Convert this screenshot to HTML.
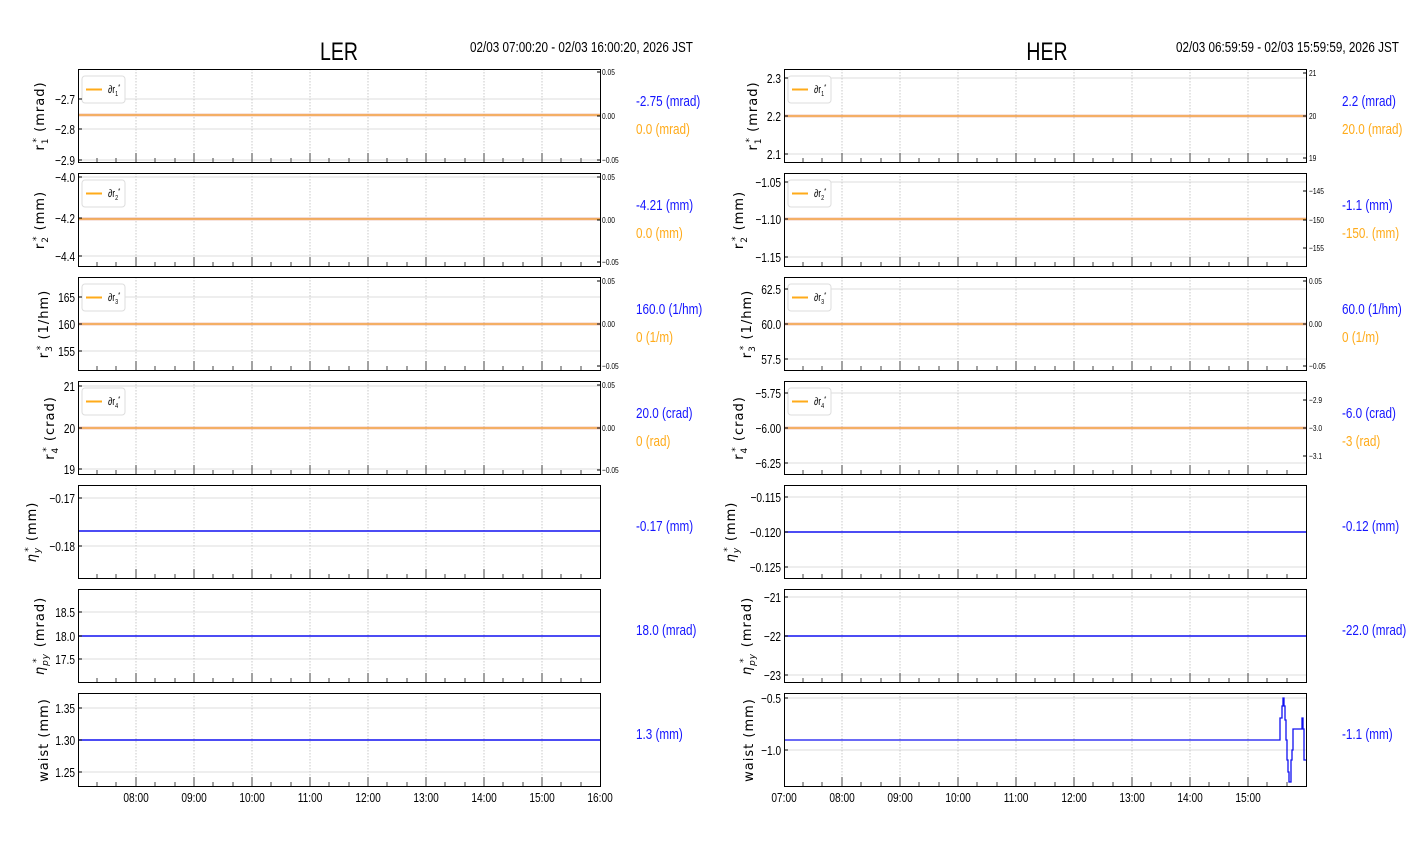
<!DOCTYPE html>
<html><head><meta charset="utf-8"><style>
html,body{margin:0;padding:0;background:#fff;}
svg{display:block;}
.n{font-family:"Liberation Sans Narrow","Liberation Sans",sans-serif;}
.n text{transform-box:fill-box;transform-origin:0 0;transform:scaleX(.78);}
.n .e text{transform-origin:100% 0;}
.n .m text,.n text.m{transform-origin:50% 0;}
.yl{font-family:"DejaVu Sans",sans-serif;font-size:13px;letter-spacing:1px;}
.tk{font-size:13px;}
.rt{font-size:8.5px;}
.bl{fill:#1515ff;font-size:15px;}
.or{fill:#ffab1a;font-size:15px;}
</style></head><body>
<svg width="1412" height="864" viewBox="0 0 1412 864" xmlns="http://www.w3.org/2000/svg">
<defs>
<path id="tk" d="M97 0v-4M116 0v-4M136 0v-9M155 0v-4M175 0v-4M194 0v-9M213 0v-4M233 0v-4M252 0v-9M271 0v-4M291 0v-4M310 0v-9M329 0v-4M349 0v-4M368 0v-9M387 0v-4M407 0v-4M426 0v-9M445 0v-4M465 0v-4M484 0v-9M503 0v-4M523 0v-4M542 0v-9M561 0v-4M581 0v-4" stroke="#444" stroke-width="1" fill="none"/>
<path id="vg" d="M136 0v93M194 0v93M252 0v93M310 0v93M368 0v93M426 0v93M484 0v93M542 0v93" stroke="#c8c8c8" stroke-width="1" stroke-dasharray="1.5,1.5" fill="none"/>
<g id="lg"><rect x="82" y="7" width="43" height="27" rx="3" fill="#fff" stroke="#ddd"/><path d="M86 20.5h16" stroke="#ffab1a" stroke-width="2"/></g>
</defs>

<g class="n">
<text x="339" y="60" font-size="25" text-anchor="middle" class="m">LER</text>
<text x="470" y="52" font-size="15">02/03 07:00:20 - 02/03 16:00:20, 2026 JST</text>
<text x="1047" y="60" font-size="25" text-anchor="middle" class="m">HER</text>
<text x="1176" y="52" font-size="15">02/03 06:59:59 - 02/03 15:59:59, 2026 JST</text>

<g fill="none" stroke="#ddd">
<path d="M78 99h522M78 129h522M78 160h522"/>
<path d="M78 177h522M78 218h522M78 256h522"/>
<path d="M78 297h522M78 324h522M78 351h522"/>
<path d="M78 386h522M78 428h522M78 469h522"/>
<path d="M78 498h522M78 546h522"/>
<path d="M78 612h522M78 636h522M78 659h522"/>
<path d="M78 708h522M78 740h522M78 772h522"/>
<path d="M784 78h522M784 116h522M784 154h522"/>
<path d="M784 182h522M784 219h522M784 257h522"/>
<path d="M784 289h522M784 324h522M784 359h522"/>
<path d="M784 393h522M784 428h522M784 463h522"/>
<path d="M784 497h522M784 532h522M784 567h522"/>
<path d="M784 597h522M784 636h522M784 675h522"/>
<path d="M784 698h522M784 750h522"/>
</g>
<g>
<use href="#vg" y="69"/><use href="#vg" y="173"/><use href="#vg" y="277"/><use href="#vg" y="381"/><use href="#vg" y="485"/><use href="#vg" y="589"/><use href="#vg" y="693"/>
<use href="#vg" x="706" y="69"/><use href="#vg" x="706" y="173"/><use href="#vg" x="706" y="277"/><use href="#vg" x="706" y="381"/><use href="#vg" x="706" y="485"/><use href="#vg" x="706" y="589"/><use href="#vg" x="706" y="693"/>
</g>
<g>
<use href="#tk" y="162"/><use href="#tk" y="266"/><use href="#tk" y="370"/><use href="#tk" y="474"/><use href="#tk" y="578"/><use href="#tk" y="682"/><use href="#tk" y="786"/>
<use href="#tk" x="706" y="162"/><use href="#tk" x="706" y="266"/><use href="#tk" x="706" y="370"/><use href="#tk" x="706" y="474"/><use href="#tk" x="706" y="578"/><use href="#tk" x="706" y="682"/><use href="#tk" x="706" y="786"/>
</g>

<g fill="none">
<path d="M78 115h522M78 219h522M78 324h522M78 428h522M784 116h522M784 219h522M784 324h522M784 428h522" stroke="#eaa493" stroke-width="3" opacity="0.6"/>
<path d="M78 115h522M78 219h522M78 324h522M78 428h522M784 116h522M784 219h522M784 324h522M784 428h522" stroke="#f5a030" stroke-width="1.2"/>
<path d="M78 531h522M78 636h522M78 740h522M784 532h522M784 636h522" stroke="#1010f0" stroke-width="1.6"/>
<path d="M784 740H1280V718H1282V706H1283V698H1284V706H1285V720H1286V740H1287V760H1288V772H1289V782H1291V760H1292V750H1293V729H1302V718H1303V729H1304V760H1306" stroke="#1010f0" stroke-width="1.3"/>
</g>

<g font-size="11">
<use href="#lg" y="69"/><text x="108" y="93">∂r<tspan font-size="7" dy="3">1</tspan><tspan font-size="7" dy="-7">*</tspan></text>
<use href="#lg" y="173"/><text x="108" y="197">∂r<tspan font-size="7" dy="3">2</tspan><tspan font-size="7" dy="-7">*</tspan></text>
<use href="#lg" y="277"/><text x="108" y="301">∂r<tspan font-size="7" dy="3">3</tspan><tspan font-size="7" dy="-7">*</tspan></text>
<use href="#lg" y="381"/><text x="108" y="405">∂r<tspan font-size="7" dy="3">4</tspan><tspan font-size="7" dy="-7">*</tspan></text>
<use href="#lg" x="706" y="69"/><text x="814" y="93">∂r<tspan font-size="7" dy="3">1</tspan><tspan font-size="7" dy="-7">*</tspan></text>
<use href="#lg" x="706" y="173"/><text x="814" y="197">∂r<tspan font-size="7" dy="3">2</tspan><tspan font-size="7" dy="-7">*</tspan></text>
<use href="#lg" x="706" y="277"/><text x="814" y="301">∂r<tspan font-size="7" dy="3">3</tspan><tspan font-size="7" dy="-7">*</tspan></text>
<use href="#lg" x="706" y="381"/><text x="814" y="405">∂r<tspan font-size="7" dy="3">4</tspan><tspan font-size="7" dy="-7">*</tspan></text>
</g>

<g fill="none" stroke="#000" stroke-width="1">
<rect x="78.5" y="69.5" width="522" height="93"/><rect x="78.5" y="173.5" width="522" height="93"/><rect x="78.5" y="277.5" width="522" height="93"/><rect x="78.5" y="381.5" width="522" height="93"/><rect x="78.5" y="485.5" width="522" height="93"/><rect x="78.5" y="589.5" width="522" height="93"/><rect x="78.5" y="693.5" width="522" height="93"/>
<rect x="784.5" y="69.5" width="522" height="93"/><rect x="784.5" y="173.5" width="522" height="93"/><rect x="784.5" y="277.5" width="522" height="93"/><rect x="784.5" y="381.5" width="522" height="93"/><rect x="784.5" y="485.5" width="522" height="93"/><rect x="784.5" y="589.5" width="522" height="93"/><rect x="784.5" y="693.5" width="522" height="93"/>
</g>
<g stroke="#000" stroke-width="1">
<path d="M78 99h4M78 129h4M78 160h4M78 177h4M78 218h4M78 256h4M78 297h4M78 324h4M78 351h4M78 386h4M78 428h4M78 469h4M78 498h4M78 546h4M78 612h4M78 636h4M78 659h4M78 708h4M78 740h4M78 772h4"/>
<path d="M784 78h4M784 116h4M784 154h4M784 182h4M784 219h4M784 257h4M784 289h4M784 324h4M784 359h4M784 393h4M784 428h4M784 463h4M784 497h4M784 532h4M784 567h4M784 597h4M784 636h4M784 675h4M784 698h4M784 750h4"/>
<path d="M600 72h-3M600 116h-3M600 160h-3M600 177h-3M600 220h-3M600 262h-3M600 281h-3M600 324h-3M600 366h-3M600 385h-3M600 428h-3M600 470h-3"/>
<path d="M1306 73h-3M1306 116h-3M1306 158h-3M1306 191h-3M1306 220h-3M1306 248h-3M1306 281h-3M1306 324h-3M1306 366h-3M1306 400h-3M1306 428h-3M1306 456h-3"/>
</g>

<g class="tk e" text-anchor="end">
<text x="75" y="104">−2.7</text><text x="75" y="134">−2.8</text><text x="75" y="165">−2.9</text>
<text x="75" y="182">−4.0</text><text x="75" y="223">−4.2</text><text x="75" y="261">−4.4</text>
<text x="75" y="302">165</text><text x="75" y="329">160</text><text x="75" y="356">155</text>
<text x="75" y="391">21</text><text x="75" y="433">20</text><text x="75" y="474">19</text>
<text x="75" y="503">−0.17</text><text x="75" y="551">−0.18</text>
<text x="75" y="617">18.5</text><text x="75" y="641">18.0</text><text x="75" y="664">17.5</text>
<text x="75" y="713">1.35</text><text x="75" y="745">1.30</text><text x="75" y="777">1.25</text>
<text x="781" y="83">2.3</text><text x="781" y="121">2.2</text><text x="781" y="159">2.1</text>
<text x="781" y="187">−1.05</text><text x="781" y="224">−1.10</text><text x="781" y="262">−1.15</text>
<text x="781" y="294">62.5</text><text x="781" y="329">60.0</text><text x="781" y="364">57.5</text>
<text x="781" y="398">−5.75</text><text x="781" y="433">−6.00</text><text x="781" y="468">−6.25</text>
<text x="781" y="502">−0.115</text><text x="781" y="537">−0.120</text><text x="781" y="572">−0.125</text>
<text x="781" y="602">−21</text><text x="781" y="641">−22</text><text x="781" y="680">−23</text>
<text x="781" y="703">−0.5</text><text x="781" y="755">−1.0</text>
</g>
<g class="rt">
<text x="602" y="75">0.05</text><text x="602" y="119">0.00</text><text x="602" y="163">−0.05</text>
<text x="602" y="180">0.05</text><text x="602" y="223">0.00</text><text x="602" y="265">−0.05</text>
<text x="602" y="284">0.05</text><text x="602" y="327">0.00</text><text x="602" y="369">−0.05</text>
<text x="602" y="388">0.05</text><text x="602" y="431">0.00</text><text x="602" y="473">−0.05</text>
<text x="1309" y="76">21</text><text x="1309" y="119">20</text><text x="1309" y="161">19</text>
<text x="1309" y="194">−145</text><text x="1309" y="223">−150</text><text x="1309" y="251">−155</text>
<text x="1309" y="284">0.05</text><text x="1309" y="327">0.00</text><text x="1309" y="369">−0.05</text>
<text x="1309" y="403">−2.9</text><text x="1309" y="431">−3.0</text><text x="1309" y="459">−3.1</text>
</g>

<g class="tk m" text-anchor="middle">
<text x="136" y="802">08:00</text><text x="194" y="802">09:00</text><text x="252" y="802">10:00</text><text x="310" y="802">11:00</text><text x="368" y="802">12:00</text><text x="426" y="802">13:00</text><text x="484" y="802">14:00</text><text x="542" y="802">15:00</text><text x="600" y="802">16:00</text>
<text x="784" y="802">07:00</text><text x="842" y="802">08:00</text><text x="900" y="802">09:00</text><text x="958" y="802">10:00</text><text x="1016" y="802">11:00</text><text x="1074" y="802">12:00</text><text x="1132" y="802">13:00</text><text x="1190" y="802">14:00</text><text x="1248" y="802">15:00</text>
</g>

<text x="636" y="106" class="bl">-2.75 (mrad)</text><text x="636" y="134" class="or">0.0 (mrad)</text>
<text x="636" y="210" class="bl">-4.21 (mm)</text><text x="636" y="238" class="or">0.0 (mm)</text>
<text x="636" y="314" class="bl">160.0 (1/hm)</text><text x="636" y="342" class="or">0 (1/m)</text>
<text x="636" y="418" class="bl">20.0 (crad)</text><text x="636" y="446" class="or">0 (rad)</text>
<text x="636" y="531" class="bl">-0.17 (mm)</text>
<text x="636" y="635" class="bl">18.0 (mrad)</text>
<text x="636" y="739" class="bl">1.3 (mm)</text>
<text x="1342" y="106" class="bl">2.2 (mrad)</text><text x="1342" y="134" class="or">20.0 (mrad)</text>
<text x="1342" y="210" class="bl">-1.1 (mm)</text><text x="1342" y="238" class="or">-150. (mm)</text>
<text x="1342" y="314" class="bl">60.0 (1/hm)</text><text x="1342" y="342" class="or">0 (1/m)</text>
<text x="1342" y="418" class="bl">-6.0 (crad)</text><text x="1342" y="446" class="or">-3 (rad)</text>
<text x="1342" y="531" class="bl">-0.12 (mm)</text>
<text x="1342" y="635" class="bl">-22.0 (mrad)</text>
<text x="1342" y="739" class="bl">-1.1 (mm)</text>
</g>

<g class="yl" text-anchor="middle">
<text transform="translate(44,116) rotate(-90)">r<tspan font-size="9" dy="4">1</tspan><tspan font-size="9" dy="-9" dx="-5">*</tspan><tspan dy="5"> (mrad)</tspan></text>
<text transform="translate(44,220) rotate(-90)">r<tspan font-size="9" dy="4">2</tspan><tspan font-size="9" dy="-9" dx="-5">*</tspan><tspan dy="5"> (mm)</tspan></text>
<text transform="translate(48,324) rotate(-90)">r<tspan font-size="9" dy="4">3</tspan><tspan font-size="9" dy="-9" dx="-5">*</tspan><tspan dy="5"> (1/hm)</tspan></text>
<text transform="translate(54,428) rotate(-90)">r<tspan font-size="9" dy="4">4</tspan><tspan font-size="9" dy="-9" dx="-5">*</tspan><tspan dy="5"> (crad)</tspan></text>
<text transform="translate(36,532) rotate(-90)"><tspan font-style="italic">η</tspan><tspan font-size="9" dy="4" font-style="italic">y</tspan><tspan font-size="9" dy="-9" dx="-5">*</tspan><tspan dy="5"> (mm)</tspan></text>
<text transform="translate(44,636) rotate(-90)"><tspan font-style="italic">η</tspan><tspan font-size="9" dy="4" font-style="italic">py</tspan><tspan font-size="9" dy="-9" dx="-10">*</tspan><tspan dy="5" dx="5"> (mrad)</tspan></text>
<text transform="translate(48,740) rotate(-90)">waist (mm)</text>
<text transform="translate(757,116) rotate(-90)">r<tspan font-size="9" dy="4">1</tspan><tspan font-size="9" dy="-9" dx="-5">*</tspan><tspan dy="5"> (mrad)</tspan></text>
<text transform="translate(743,220) rotate(-90)">r<tspan font-size="9" dy="4">2</tspan><tspan font-size="9" dy="-9" dx="-5">*</tspan><tspan dy="5"> (mm)</tspan></text>
<text transform="translate(751,324) rotate(-90)">r<tspan font-size="9" dy="4">3</tspan><tspan font-size="9" dy="-9" dx="-5">*</tspan><tspan dy="5"> (1/hm)</tspan></text>
<text transform="translate(743,428) rotate(-90)">r<tspan font-size="9" dy="4">4</tspan><tspan font-size="9" dy="-9" dx="-5">*</tspan><tspan dy="5"> (crad)</tspan></text>
<text transform="translate(735,532) rotate(-90)"><tspan font-style="italic">η</tspan><tspan font-size="9" dy="4" font-style="italic">y</tspan><tspan font-size="9" dy="-9" dx="-5">*</tspan><tspan dy="5"> (mm)</tspan></text>
<text transform="translate(751,636) rotate(-90)"><tspan font-style="italic">η</tspan><tspan font-size="9" dy="4" font-style="italic">py</tspan><tspan font-size="9" dy="-9" dx="-10">*</tspan><tspan dy="5" dx="5"> (mrad)</tspan></text>
<text transform="translate(753,740) rotate(-90)">waist (mm)</text>
</g>
</svg>
</body></html>
